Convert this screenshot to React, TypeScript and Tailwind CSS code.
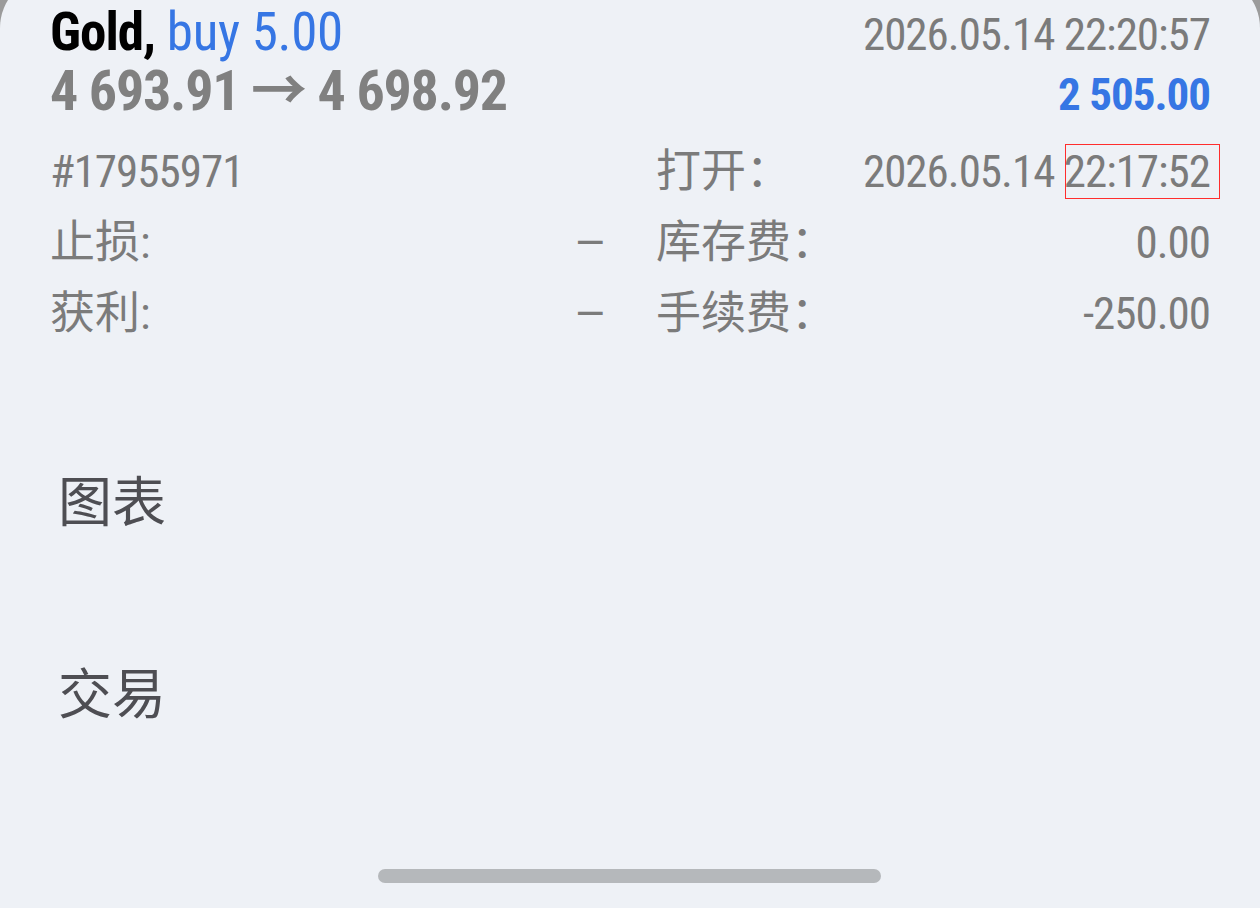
import React from "react";

const num = "font-['Roboto','Noto_Sans_CJK_SC',sans-serif] [font-stretch:condensed]";

function Row({ label, value }: { label: string; value: string }) {
  return (
    <div className="flex items-baseline justify-between h-[71px] leading-[71px]">
      <span className="text-[45px] text-[#7b7b7b]">{label}</span>
      <span className="text-[45px] tracking-[-1px] text-[#7b7b7b]">{value}</span>
    </div>
  );
}

export default function App() {
  return (
    <div className="w-[1260px] h-[908px] bg-[#9b9b9b] overflow-hidden">
      <div className={`relative -mt-[25px] h-[933px] rounded-t-[53px] bg-[#eef1f6] pt-[25px] ${num}`}>
        <div className="px-[50px]">
          <div className="flex items-baseline justify-between h-[60px] pt-[2px] leading-[60px]">
            <div className="whitespace-nowrap text-[53px]">
              <span className="font-bold tracking-[-1px] text-black">Gold,</span>
              <span className="tracking-[-0.3px] text-[#3676e4]"> buy 5.00</span>
            </div>
            <span className="text-[45px] tracking-[-1px] text-[#7b7b7b]">2026.05.14 22:20:57</span>
          </div>
          <div className="flex items-baseline justify-between h-[60px] pt-[1px] leading-[60px]">
            <span className="text-[56px] font-bold tracking-[-1.2px] text-[#808080]">4 693.91 → 4 698.92</span>
            <span className="text-[45px] font-bold tracking-[-1px] text-[#3676e4]">2 505.00</span>
          </div>
          <div className="mt-[16px] grid grid-cols-2 gap-x-[52px]">
            <div>
              <div className="h-[71px] leading-[71px] text-[45px] tracking-[-1px] text-[#7b7b7b]">#17955971</div>
              <Row label="止损:" value="—" />
              <Row label="获利:" value="—" />
            </div>
            <div>
              <div className="flex items-baseline justify-between h-[71px] leading-[71px]">
                <span className="text-[45px] text-[#7b7b7b]">打开：</span>
                <span className="text-[45px] tracking-[-1px] text-[#7b7b7b]">
                  2026.05.14{" "}
                  <span className="relative">
                    22:17:52
                    <span className="absolute left-[1px] -right-[10px] -top-[1px] -bottom-[1px] border border-[#ff2d2d]"></span>
                  </span>
                </span>
              </div>
              <Row label="库存费：" value="0.00" />
              <Row label="手续费：" value="-250.00" />
            </div>
          </div>
          <div className="mt-[125px] pl-[8px] h-[60px] leading-[60px] text-[54px] text-[#4e4e53]">图表</div>
          <div className="mt-[132px] pl-[8px] h-[60px] leading-[60px] text-[54px] text-[#4e4e53]">交易</div>
        </div>
        <div className="absolute left-[378px] top-[894px] w-[503px] h-[14px] rounded-full bg-[#b5b8bb]"></div>
      </div>
    </div>
  );
}
